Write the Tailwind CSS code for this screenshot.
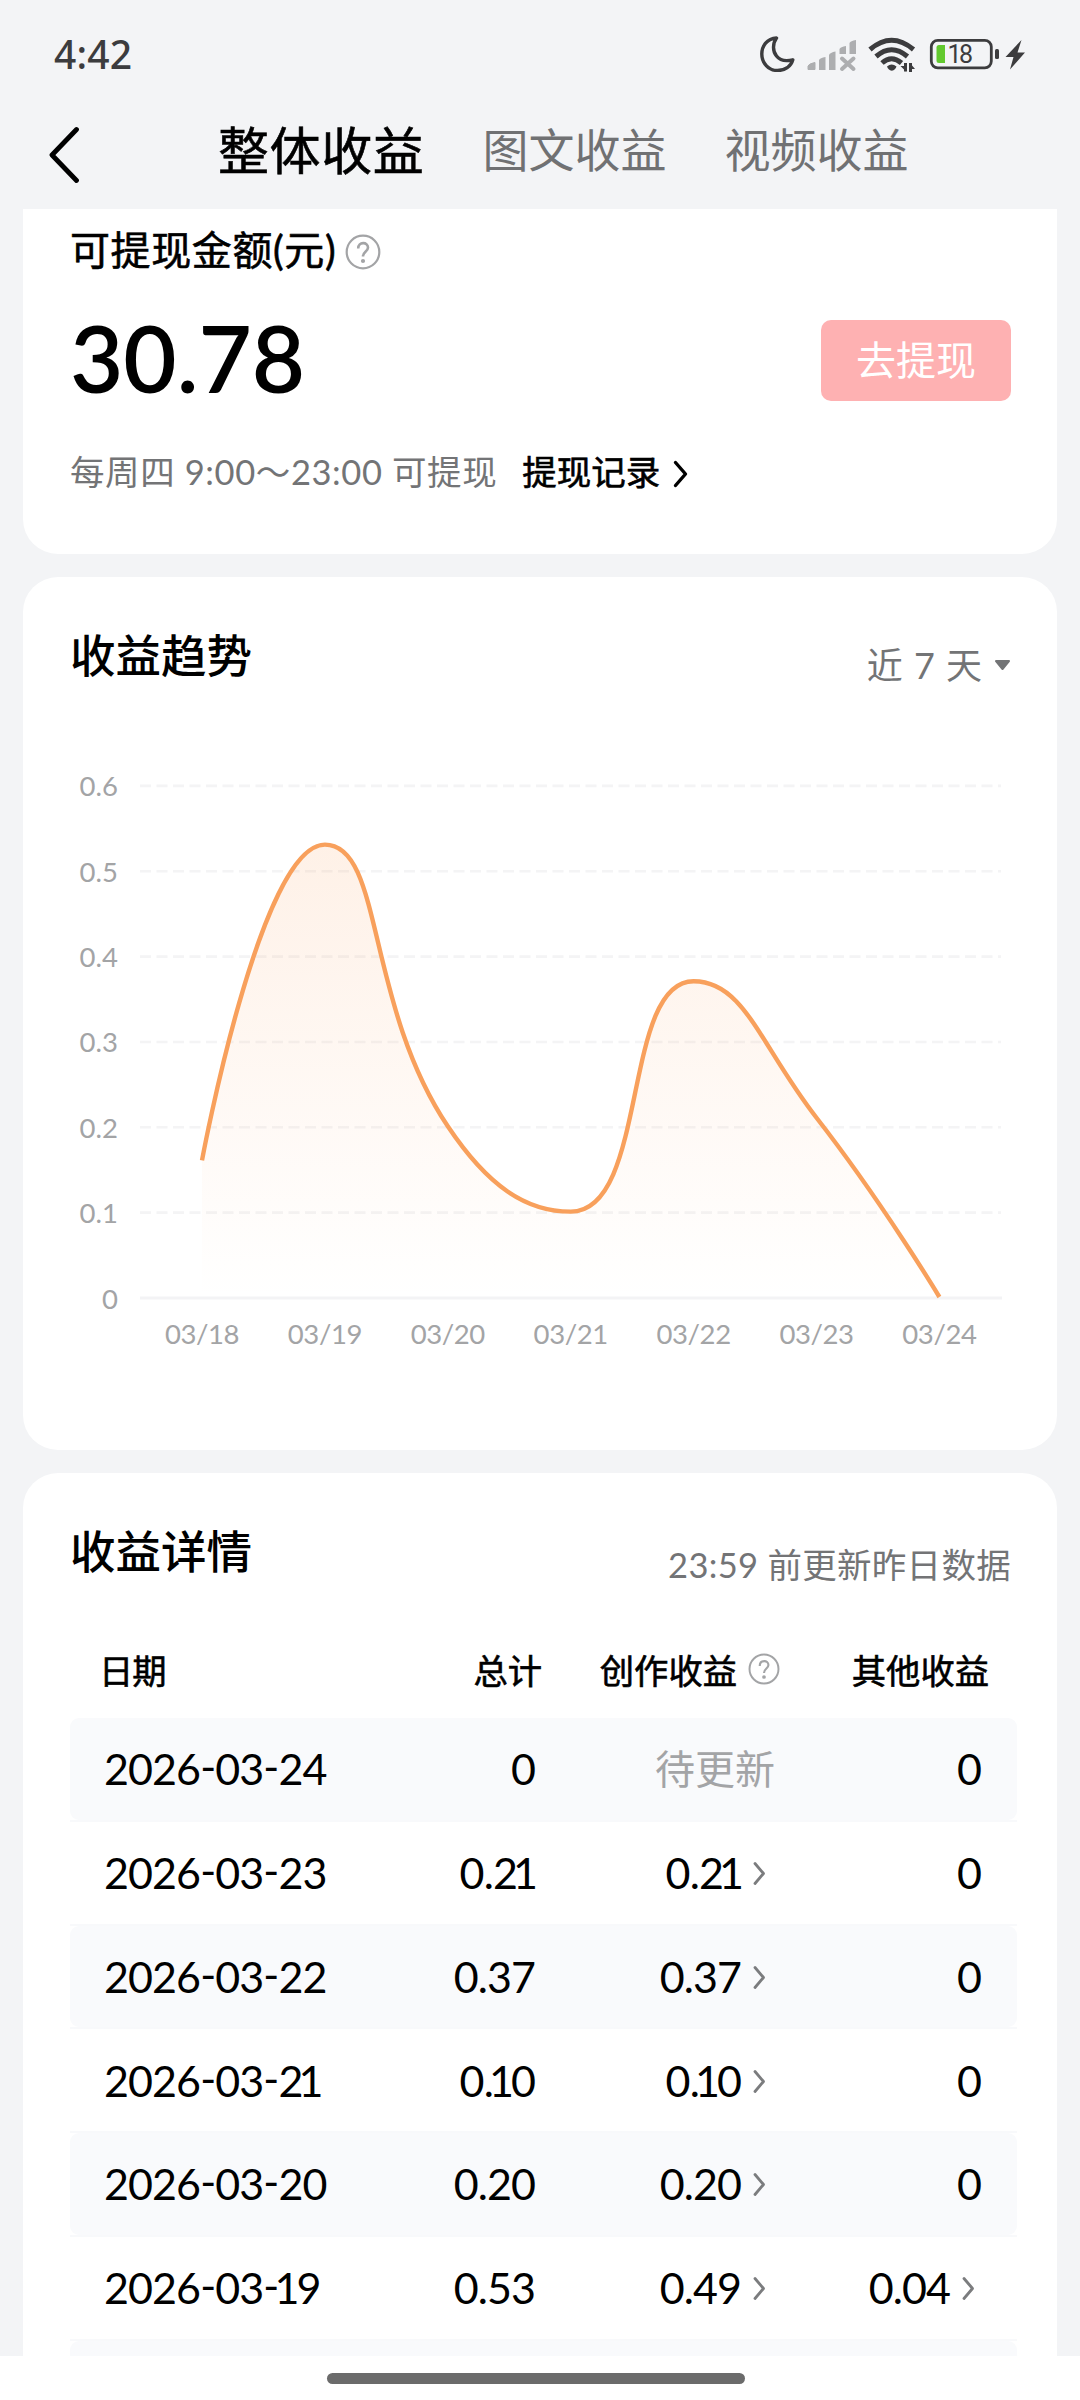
<!DOCTYPE html>
<html lang="zh-CN">
<head>
    <meta charset="UTF-8">
    <meta name="viewport" content="width=device-width, initial-scale=1.0">
    <title>整体收益</title>
    <script src="https://cdn.jsdelivr.net/npm/@tailwindcss/browser@4"></script>
    <style>
        body {
            font-family: Lato, 'Noto Sans CJK SC', sans-serif;
        }
        /* Weight between regular and medium */
        .semi {
            -webkit-text-stroke: 0.6px currentColor;
        }
    </style>
</head>
<body class="bg-gray-100 text-black">

    <div class="w-[1080px] h-[2400px] flex flex-col overflow-hidden whitespace-nowrap">

        <!-- Status bar -->
        <header class="h-[109px] shrink-0 flex items-center justify-between pl-[54px] pr-[55px] text-[#3c3c3e]">
            <span class="text-[39px] leading-none font-medium font-['Noto_Sans'] tracking-[0.200px] -mt-[3px]">4:42</span>
            <svg class="w-[265px] h-[36px] -mt-[1px]" viewBox="760 36 265 36" fill="none">
                <!-- moon -->
                <path d="M776.5 38C767 38.500 761.800 46 761.800 54C761.800 63.500 769 70.500 777.500 70.500C785 70.500 791 66.500 792.800 59.800C786 61.500 780 60.500 776.500 56C772.500 51 772.500 43.500 776.500 38Z" stroke="#3c3c3e" stroke-width="3.400" stroke-linejoin="round"/>
                <!-- signal -->
                <g fill="#adaeb0">
                    <path d="M808 69.500V66Q809 63.500 815 62.500V69.500Z" stroke="#adaeb0" stroke-linejoin="round"/>
                    <path d="M819 70V60Q820 58 825.500 57V70Z"/>
                    <path d="M829 70V55Q830 52.500 835.500 51.500V70Z"/>
                    <path d="M839.500 54V49Q840.500 47 846 46V54Z"/>
                    <path d="M849.500 54V43Q850.500 41 856 40V54Z"/>
                    <path d="M842 58.500L853.500 69M853.500 58.500L842 69" stroke="#adaeb0" stroke-width="4" stroke-linecap="round"/>
                </g>
                <!-- wifi -->
                <g stroke="#3c3c3e" stroke-width="5">
                    <path d="M870 49.500Q891.500 31 913.500 49.500"/>
                    <path d="M876 56.500Q891.500 43 907.500 56.500"/>
                    <path d="M882 63Q891.500 54.500 901.500 63"/>
                </g>
                <path d="M887 66.500Q891.500 62.500 896.500 66.500Q895.500 70 891.800 70.800Q888 70 887 66.500Z" fill="#3c3c3e"/>
                <path d="M905.500 63V71.500M910.500 63V72" stroke="#3c3c3e" stroke-width="3"/>
                <path d="M906 71.500L900.500 66H906ZM910 63L915 69H910Z" fill="#3c3c3e"/>
                <!-- battery -->
                <rect x="931.300" y="40.300" width="60" height="27.500" rx="6.500" stroke="#3c3c3e" stroke-width="2.800"/>
                <path d="M939 45H945V63H939Q936.500 63 936.500 60.500V47.500Q936.500 45 939 45Z" fill="#62c92e"/>
                <rect x="995" y="49" width="4" height="10" rx="1.500" fill="#3c3c3e"/>
                <text x="947.500" y="63" font-size="25" font-family="Roboto, sans-serif" textLength="25.500" fill="#3c3c3e">18</text>
                <path d="M1021.500 40L1005.500 57H1013.500L1010 69.500L1025 52.500H1017.500Z" fill="#3c3c3e"/>
            </svg>
        </header>

        <!-- Tabs -->
        <nav class="h-[100px] shrink-0 flex items-center pl-[49px] pb-[18px] leading-none text-[46px] text-[#707173]">
            <svg class="w-[31px] h-[58px] mt-[10px]" viewBox="0 0 31 58" fill="none" stroke="#000" stroke-width="4.800" stroke-linecap="round" stroke-linejoin="round">
                <path d="M27.500 3.500L3 29L27.500 54.500"/>
            </svg>
            <span class="semi ml-[138px] text-[51px] tracking-[0.600px] text-black">整体收益</span>
            <span class="ml-[58px]">图文收益</span>
            <span class="ml-[58px]">视频收益</span>
        </nav>

        <main class="h-[2147px] shrink-0 overflow-hidden px-[23px] flex flex-col gap-[23px]">

            <!-- Balance -->
            <section class="h-[345px] shrink-0 bg-white rounded-b-[35px] pl-[47px] pr-[46px]">
                <div class="h-[82px] flex items-center text-[40px] leading-none">
                    <span class="semi tracking-[0.600px]">可提现金额(元)</span>
                    <svg class="w-[36px] h-[36px] ml-[9px] mt-[3px]" viewBox="0 0 36 36" fill="none" stroke="#a3a4a6" stroke-width="2.200">
                        <circle cx="18" cy="18" r="16.300"/>
                        <path d="M13.200 14.500C13.200 7.500 23 7.500 23 13.500C23 17.500 18 17.500 18 22.500" stroke-width="2.600"/>
                        <circle cx="18" cy="27" r="1" fill="#a3a4a6"/>
                    </svg>
                </div>
                <div class="h-[139px] flex items-center justify-between leading-none">
                    <span class="text-[92px] font-semibold -mt-[6px]">30.78</span>
                    <button class="w-[190px] h-[81px] rounded-[10px] bg-[#feb1b2] text-white text-[40px] leading-none pb-[2px]">去提现</button>
                </div>
                <div class="h-[85px] flex items-center text-[34.500px] leading-none">
                    <span class="text-[#737476] tracking-[0.600px]">每周四 9:00～23:00 可提现</span>
                    <span class="semi ml-[25px]">提现记录</span>
                    <svg class="w-[15px] h-[28px] ml-[13px] mt-[2px]" viewBox="0 0 15 28" fill="none" stroke="#000" stroke-width="3.400" stroke-linecap="round" stroke-linejoin="round">
                        <path d="M2.500 2.500L12.500 14L2.500 25.500"/>
                    </svg>
                </div>
            </section>

            <!-- Trend -->
            <section class="h-[873px] shrink-0 bg-white rounded-[35px]">
                <div class="h-[158px] flex items-center justify-between pl-[47px] pr-[46px] leading-none">
                    <h2 class="text-[45.500px] font-medium">收益趋势</h2>
                    <div class="flex items-center mt-[18px] text-[36px] text-[#737476]">
                        <span class="[word-spacing:2px]">近 7 天</span>
                        <svg class="w-[17px] h-[12px] ml-[12px]" viewBox="0 0 17 12" fill="#737476" stroke="#737476" stroke-width="2" stroke-linejoin="round">
                            <path d="M2 2H15L8.500 10Z"/>
                        </svg>
                    </div>
                </div>
                <svg id="trend-chart" class="w-[1034px] h-[665px]" viewBox="23 735 1034 665" fill="none" font-size="27.500" font-family="Lato, sans-serif">
                    <defs>
                        <linearGradient id="area-fill" gradientUnits="userSpaceOnUse" x1="0" y1="844" x2="0" y2="1298">
                            <stop offset="0" stop-color="#fa9246" stop-opacity="0.130"/>
                            <stop offset="1" stop-color="#fa9246" stop-opacity="0"/>
                        </linearGradient>
                    </defs>
                </svg>
            </section>

            <!-- Details -->
            <section class="h-[1000px] shrink-0 bg-white rounded-t-[35px] pl-[47px] pr-[40px]">
                <div class="h-[158px] flex items-center justify-between leading-none pr-[6px]">
                    <h2 class="text-[45.500px] font-medium">收益详情</h2>
                    <span class="mt-[26px] text-[34.500px] tracking-[0.300px] text-[#737476]">23:59 前更新昨日数据</span>
                </div>
                <div class="semi h-[81px] mb-[6px] grid grid-cols-[250px_222px_238px_209px] items-center text-[34.300px] leading-none">
                    <span class="pl-[29px] -tracking-[1px]">日期</span>
                    <span class="text-right">总计</span>
                    <span class="flex items-center justify-end">
                        创作收益
                        <svg class="w-[32px] h-[32px] ml-[11px] -mt-[4px]" viewBox="0 0 36 36" fill="none" stroke="#a3a4a6" stroke-width="2.200">
                            <circle cx="18" cy="18" r="16.300"/>
                            <path d="M13.200 14.500C13.200 7.500 23 7.500 23 13.500C23 17.500 18 17.500 18 22.500" stroke-width="2.400"/>
                            <circle cx="18" cy="27" r="1" fill="#a3a4a6"/>
                        </svg>
                    </span>
                    <span class="text-right">其他收益</span>
                </div>
                <div id="detail-rows"></div>
            </section>
        </main>

        <!-- Home indicator -->
        <footer class="h-[44px] shrink-0 bg-white flex justify-center pt-[17px]">
            <div class="w-[418px] h-[11px] -ml-[8px] rounded-full bg-[#6b6b6b]"></div>
        </footer>
    </div>

    <script>
        // --- Data ---
        const trend = [
            { day: '03/18', value: 0.16 },
            { day: '03/19', value: 0.53 },
            { day: '03/20', value: 0.20 },
            { day: '03/21', value: 0.10 },
            { day: '03/22', value: 0.37 },
            { day: '03/23', value: 0.21 },
            { day: '03/24', value: 0 }
        ];

        const details = [
            { date: '2026-03-24', total: '0', creation: null, other: '0' },
            { date: '2026-03-23', total: '0.21', creation: '0.21', other: '0' },
            { date: '2026-03-22', total: '0.37', creation: '0.37', other: '0' },
            { date: '2026-03-21', total: '0.10', creation: '0.10', other: '0' },
            { date: '2026-03-20', total: '0.20', creation: '0.20', other: '0' },
            { date: '2026-03-19', total: '0.53', creation: '0.49', other: '0.04' },
            { date: '', total: '', creation: '', other: '' }
        ];

        // --- Chart ---
        const baseY = 1298;
        const stepY = 85.35;
        const clamp = (v, a, b) => Math.max(Math.min(v, Math.max(a, b)), Math.min(a, b));

        /**
         * Smooth path through the points, with control points kept between neighbours.
         */
        function smoothPath(pts) {
            let d = `M${pts[0].x} ${pts[0].y}`;
            let out = pts[0];
            for (let i = 1; i < pts.length; i++) {
                const p = pts[i];
                const prev = pts[i - 1];
                const next = pts[i + 1];
                let cin = p;
                let cout = p;
                if (next) {
                    const lenPrev = Math.hypot(p.x - prev.x, p.y - prev.y);
                    const lenNext = Math.hypot(next.x - p.x, next.y - p.y);
                    const ratio = lenNext / (lenNext + lenPrev);
                    const axis = (k) => {
                        let o = clamp(p[k] + (next[k] - prev[k]) * 0.5 * ratio, next[k], p[k]);
                        const c = clamp(p[k] - (o - p[k]) * lenPrev / lenNext, prev[k], p[k]);
                        o = p[k] + (p[k] - c) * lenNext / lenPrev;
                        return [c, o];
                    };
                    const [cx, ox] = axis('x');
                    const [cy, oy] = axis('y');
                    cin = { x: cx, y: cy };
                    cout = { x: ox, y: oy };
                }
                d += `C${out.x} ${out.y} ${cin.x} ${cin.y} ${p.x} ${p.y}`;
                out = cout;
            }
            return d;
        }

        function drawChart() {
            const pts = trend.map((t, i) => ({ x: 202 + i * 122.9, y: baseY - 1 - t.value * 10 * stepY }));
            let svg = '';
            for (let i = 0; i <= 6; i++) {
                const y = baseY - i * stepY;
                const label = i === 0 ? '0' : (i / 10).toFixed(1);
                svg += `<text x="118" y="${y + 10.5}" text-anchor="end" fill="#a3a4a6">${label}</text>`;
                svg += i === 0
                    ? `<path d="M140 ${y}H1002" stroke="#f3f3f5" stroke-width="3"/>`
                    : `<path d="M140 ${y}H1001" stroke="#f4f4f5" stroke-width="2.600" stroke-dasharray="11 5.500"/>`;
            }
            const line = smoothPath(pts);
            svg += `<path d="${line}V${baseY}H${pts[0].x}Z" fill="url(#area-fill)"/>`;
            svg += `<path d="${line}" stroke="#f8a05c" stroke-width="4.400" stroke-linejoin="bevel"/>`;
            trend.forEach((t, i) => {
                svg += `<text x="${pts[i].x}" y="1344" text-anchor="middle" letter-spacing="-0.400" fill="#a3a4a6">${t.day}</text>`;
            });
            document.getElementById('trend-chart').innerHTML += svg;
        }

        // --- Detail rows ---
        const arrow = '<svg class="w-[13px] h-[25px] ml-[12px] mt-[2px]" viewBox="0 0 13 25" fill="none" stroke="#7b7c7e" stroke-width="2.800" stroke-linecap="round" stroke-linejoin="round"><path d="M2 2.500L10.500 12.500L2 22.500"/></svg>';

        // Tightens the wide "1" and lifts hyphens to the middle of the digits
        function digits(text) {
            return '<span>' + text
                .replace(/1/g, '<i class="not-italic -ml-[4px] -mr-[2px]">1</i>')
                .replace(/-(?=\d\d)/g, (m, at, s) => /[\d>]/.test(s[at - 1] || '') ? '<i class="not-italic relative -top-[3px]">-</i>' : m) + '</span>';
        }

        function formatDate(date) {
            return date.split('-').map(digits).join('<i class="not-italic relative -top-[3px]">-</i>');
        }

        function drawRows() {
            document.getElementById('detail-rows').innerHTML = details.map((row, i) => {
                const bg = i % 2 === 0 ? 'bg-[#f9fafc]' : 'bg-white';
                const creation = row.creation === null
                    ? '<span class="text-[40px] tracking-normal text-[#a3a4a6] pr-[1px]">待更新</span>'
                    : `<span class="flex items-center pr-[10px]">${digits(row.creation)}${row.creation ? arrow : ''}</span>`;
                const other = row.other.length > 1
                    ? `<span class="flex items-center pr-[42px]">${digits(row.other)}${arrow}</span>`
                    : `<span class="pr-[36px]">${row.other}</span>`;
                return `
                    <div class="h-[103.750px] border-b-2 border-[#f8f9fb]">
                        <div class="${bg} h-full rounded-[9px] grid grid-cols-[250px_216px_240px_241px] items-center text-[43px] leading-none -tracking-[0.900px]">
                            <span class="pl-[34px]">${formatDate(row.date)}</span>
                            <span class="text-right pr-[1px]">${digits(row.total)}</span>
                            <span class="flex justify-end">${creation}</span>
                            <span class="flex justify-end">${other}</span>
                        </div>
                    </div>`;
            }).join('');
        }

        drawChart();
        drawRows();
    </script>
</body>
</html>
